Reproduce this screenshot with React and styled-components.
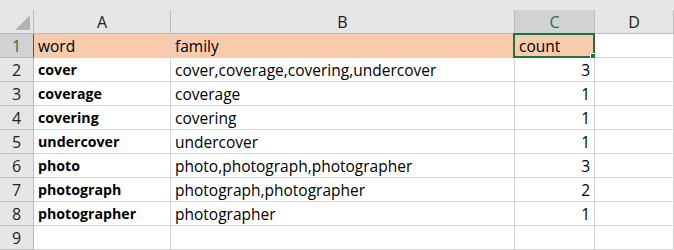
import React from "react";
import styled, { createGlobalStyle } from "styled-components";

const GlobalStyle = createGlobalStyle`
  html, body {
    margin: 0;
    padding: 0;
    background: #ffffff;
  }
  body {
    font-family: "Open Sans", "Noto Sans", sans-serif;
  }
`;

const Sheet = styled.div`
  width: 674px;
  height: 250px;
  overflow: hidden;
  background: #ffffff;
`;

const TopStrip = styled.div`
  height: 10px;
  background: #e6e6e6;
`;

const Grid = styled.div`
  display: grid;
  grid-template-columns: 34px 137px 344px 80px 1fr;
  grid-auto-rows: 24px;
`;

const Corner = styled.div`
  position: relative;
  background: #e6e6e6;
  border-right: 1px solid #bcbcbc;
  border-bottom: 1px solid #bcbcbc;

  &::after {
    content: "";
    position: absolute;
    right: 3px;
    bottom: 3px;
    width: 0;
    height: 0;
    border-left: 15px solid transparent;
    border-bottom: 15px solid #b4b4b4;
  }
`;

const ColHead = styled.div`
  display: flex;
  align-items: center;
  justify-content: center;
  font-size: 16px;
  color: ${(p) => (p.active ? "#217346" : "#222222")};
  background: ${(p) => (p.active ? "#d2d2d2" : "#e6e6e6")};
  border-right: 1px solid #bcbcbc;
  border-bottom: 1px solid ${(p) => (p.active ? "#217346" : "#bcbcbc")};
  box-sizing: border-box;
`;

const RowHead = styled.div`
  display: flex;
  align-items: center;
  justify-content: center;
  font-size: 16px;
  color: ${(p) => (p.active ? "#217346" : "#222222")};
  background: ${(p) => (p.active ? "#d2d2d2" : "#e6e6e6")};
  border-right: 1px solid ${(p) => (p.active ? "#217346" : "#bcbcbc")};
  border-bottom: 1px solid #bcbcbc;
`;

const Cell = styled.div`
  position: relative;
  display: flex;
  align-items: center;
  justify-content: ${(p) => (p.num ? "flex-end" : "flex-start")};
  padding: 0 4px;
  font-size: ${(p) => (p.bold ? "14.2px" : "15.5px")};
  font-weight: ${(p) => (p.bold ? 700 : 400)};
  color: #000000;
  white-space: nowrap;
  background: ${(p) => (p.head ? "#f8cbad" : "#ffffff")};
  border-right: 1px solid #d4d4d4;
  border-bottom: 1px solid #d4d4d4;
`;

const Selection = styled.div`
  position: absolute;
  left: -2px;
  top: -1px;
  right: -1px;
  bottom: -1px;
  border: 2px solid #217346;
  pointer-events: none;

  &::after {
    content: "";
    position: absolute;
    right: -4px;
    bottom: -4px;
    width: 5px;
    height: 5px;
    background: #217346;
    border: 1px solid #ffffff;
  }
`;

const rows = [
  ["cover", "cover,coverage,covering,undercover", 3],
  ["coverage", "coverage", 1],
  ["covering", "covering", 1],
  ["undercover", "undercover", 1],
  ["photo", "photo,photograph,photographer", 3],
  ["photograph", "photograph,photographer", 2],
  ["photographer", "photographer", 1],
];

export default function App() {
  return (
    <Sheet>
      <GlobalStyle />
      <TopStrip />
      <Grid>
        <Corner />
        <ColHead>A</ColHead>
        <ColHead>B</ColHead>
        <ColHead active>C</ColHead>
        <ColHead>D</ColHead>

        <RowHead active>1</RowHead>
        <Cell head>word</Cell>
        <Cell head>family</Cell>
        <Cell head>
          count
          <Selection />
        </Cell>
        <Cell />

        {rows.map(([word, family, count], i) => (
          <React.Fragment key={word}>
            <RowHead>{i + 2}</RowHead>
            <Cell bold>{word}</Cell>
            <Cell>{family}</Cell>
            <Cell num>{count}</Cell>
            <Cell />
          </React.Fragment>
        ))}

        <RowHead>9</RowHead>
        <Cell />
        <Cell />
        <Cell />
        <Cell />
      </Grid>
    </Sheet>
  );
}
